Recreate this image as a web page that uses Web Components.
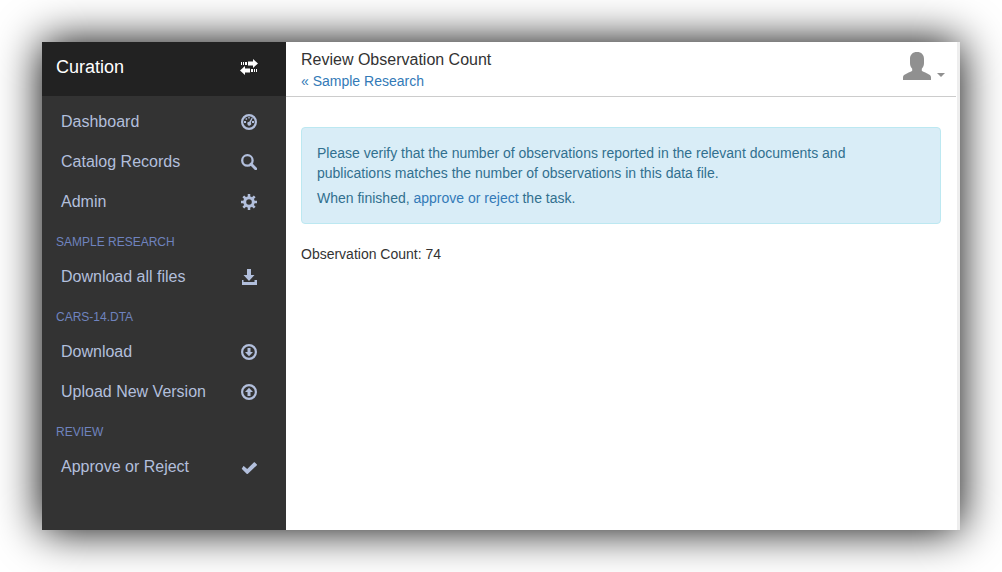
<!DOCTYPE html>
<html lang="en">
<head>
<meta charset="utf-8">
<title>Review Observation Count</title>
<style>
body{margin:0;background:#fff;font:14px/20px "Liberation Sans",Arial,sans-serif;color:#333}
</style>
</head>
<body>
<app-window>
  <side-bar slot="side" label="Curation">
    <nav-item icon="dashboard">Dashboard</nav-item>
    <nav-item icon="search">Catalog Records</nav-item>
    <nav-item icon="cog">Admin</nav-item>
    <nav-heading>SAMPLE RESEARCH</nav-heading>
    <nav-item icon="save">Download all files</nav-item>
    <nav-heading>CARS-14.DTA</nav-heading>
    <nav-item icon="download">Download</nav-item>
    <nav-item icon="upload">Upload New Version</nav-item>
    <nav-heading>REVIEW</nav-heading>
    <nav-item icon="ok">Approve or Reject</nav-item>
  </side-bar>
  <page-header label="Review Observation Count" parent="Sample Research"></page-header>
  <review-task count="74"></review-task>
</app-window>
<script>
const icons = {
  transfer: ['0 0 18 16', '<path d="M1 3h1v3H1zM3 3h1v3H3zM5 3h2v3H5zM8 2.500h5V0l5 4.500-5 4.500V6.500H8zM10 9.500v4H5V16l-5-4.500L5 7v2.500zM11 10h2v3h-2zM14 10h1v3h-1zM16 10h1v3h-1z"/>'],
  dashboard: ['0 0 16 16', '<circle cx="8" cy="8" r="6.900" fill="none" stroke="currentColor" stroke-width="2.200"/><path d="M3 7h2v2H3zM11 7h2v2h-2zM4.600 4.300h1.500v1.500H4.600zM7.300 3h1.400v1.600H7.300zM10.900 3.600l.9.5-2 4.500a1.900 1.900 0 1 1-1.500-.8z"/>'],
  search: ['0 0 16 16', '<circle cx="6.400" cy="6.400" r="5.200" fill="none" stroke="currentColor" stroke-width="2.300"/><path d="M10 10l4.700 4.700" stroke="currentColor" stroke-width="2.900" stroke-linecap="round"/>'],
  cog: ['0 0 16 16', '<circle cx="8" cy="8" r="4.300" fill="none" stroke="currentColor" stroke-width="3"/><path d="M8 0v3M8 13v3M0 8h3M13 8h3M2.300 2.300l2.200 2.200M11.500 11.500l2.200 2.200M13.700 2.300l-2.200 2.200M4.500 11.500l-2.200 2.200" stroke="currentColor" stroke-width="2.500"/>'],
  save: ['0 0 16 16', '<path d="M6 0h4v6h3.500L8 12 2.500 6H6zM1 11h1.500v2h11v-2H16v5H1z"/>'],
  download: ['0 0 16 16', '<circle cx="8" cy="8" r="6.900" fill="none" stroke="currentColor" stroke-width="2.200"/><path d="M6.500 4h3v4H12l-4 4.200L4 8h2.500z"/>'],
  upload: ['0 0 16 16', '<circle cx="8" cy="8" r="6.900" fill="none" stroke="currentColor" stroke-width="2.200"/><path d="M6.500 12h3V8H12L8 3.800 4 8h2.500z"/>'],
  ok: ['0 0 16 16', '<path d="M3 7.200l3.200 2.900 6.800-6.800a.5.500 0 0 1 .7 0l2.200 2.200a.5.500 0 0 1 0 .7l-9 8.500a1 1 0 0 1-1.300 0L.9 10.100a.5.500 0 0 1 0-.7l1.400-2.200a.5.500 0 0 1 .7 0z"/>'],
  user: ['0 0 28 28', '<path d="M14 0c4.500 0 7 2.700 7 7v4c0 2.500-.8 4.300-2.200 5.700v2.100c1.300 1.300 3 1.500 4.900 2.500C26.500 22.500 28 23.500 28 25.500V28H0v-2.500c0-2 1.500-3 4.300-4.200 1.900-1 3.600-1.200 4.900-2.500v-2.100C7.800 15.300 7 13.500 7 11V7c0-4.300 2.500-7 7-7z"/>']
};

class GlyphIcon extends HTMLElement {
  connectedCallback() {
    const [box, shapes] = icons[this.getAttribute('name')];
    this.attachShadow({mode: 'open'}).innerHTML = `<style>
      :host{display:block;flex:none;width:16px;height:16px}
      svg{display:block;width:100%;height:100%;fill:currentColor}
      </style><svg viewBox="${box}" aria-hidden="true">${shapes}</svg>`;
  }
}

class AppWindow extends HTMLElement {
  connectedCallback() {
    this.attachShadow({mode: 'open'}).innerHTML = `<style>
      :host{display:flex;margin:42px;min-height:calc(100vh - 84px);background:#fff;box-shadow:0 0 42px #000}
      aside{flex:none;width:244px;background:#333}
      main{flex:1;min-width:0;border-right:3px solid #eee}
      @media(max-width:600px){:host{flex-direction:column;margin:16px}aside{width:auto}}
      </style><aside><slot name="side"></slot></aside><main><slot></slot></main>`;
  }
}

class SideBar extends HTMLElement {
  connectedCallback() {
    this.attachShadow({mode: 'open'}).innerHTML = `<style>
      :host{display:block}
      header{display:flex;align-items:center;justify-content:space-between;box-sizing:border-box;height:54px;padding:0 28px 4px 14px;background:#222;color:#fff;font-size:18px}
      button{border:0;padding:0;background:none;color:inherit}
      glyph-icon{width:18px}
      nav{padding:6px 0 40px}
      </style><header><span>${this.getAttribute('label')}</span><button aria-label="Toggle menu"><glyph-icon name="transfer"></glyph-icon></button></header><nav><slot></slot></nav>`;
  }
}

class NavItem extends HTMLElement {
  connectedCallback() {
    this.attachShadow({mode: 'open'}).innerHTML = `<style>
      :host{display:block}
      a{display:flex;align-items:center;justify-content:space-between;padding:10px 29px 10px 19px;color:#b2bfdc;font-size:16px;line-height:20px;text-decoration:none}
      </style><a href="#"><span><slot></slot></span><glyph-icon name="${this.getAttribute('icon')}"></glyph-icon></a>`;
  }
}

class NavHeading extends HTMLElement {
  connectedCallback() {
    this.attachShadow({mode: 'open'}).innerHTML = `<style>
      :host{display:block;padding:10px 14px 5px;color:#6f83bf;font-size:12px;line-height:20px}
      </style><slot></slot>`;
  }
}

class PageHeader extends HTMLElement {
  connectedCallback() {
    this.attachShadow({mode: 'open'}).innerHTML = `<style>
      :host{display:flex;justify-content:space-between;align-items:flex-start;box-sizing:border-box;min-height:55px;margin-right:1px;padding:7px 11px 5px 15px;border-bottom:1px solid #ccc}
      h1{margin:0;font-size:16px;line-height:22px;font-weight:400}
      a{color:#337ab7;text-decoration:none}
      button{display:flex;align-items:flex-end;gap:6px;border:0;padding:3px 0 0;background:none;color:#909090}
      glyph-icon{width:28px;height:28px}
      i{width:0;border:4px solid transparent;border-top-color:currentColor;border-bottom:0;margin-bottom:3px}
      </style><div><h1>${this.getAttribute('label')}</h1><a href="#">« ${this.getAttribute('parent')}</a></div>
      <button aria-label="Account"><glyph-icon name="user"></glyph-icon><i></i></button>`;
  }
}

class ReviewTask extends HTMLElement {
  connectedCallback() {
    this.attachShadow({mode: 'open'}).innerHTML = `<style>
      :host{display:block;padding:30px 16px 30px 15px}
      section{margin-bottom:20px;padding:15px 35px 15px 15px;border:1px solid #bce8f1;border-radius:4px;background:#d9edf7;color:#31708f}
      p{margin:0}
      p+p{margin-top:5px}
      a{color:#337ab7;text-decoration:none}
      </style><section><p>Please verify that the number of observations reported in the relevant documents and publications matches the number of observations in this data file.</p>
      <p>When finished, <a href="#">approve or reject</a> the task.</p></section>
      <p>Observation Count: ${this.getAttribute('count')}</p>`;
  }
}

customElements.define('glyph-icon', GlyphIcon);
customElements.define('app-window', AppWindow);
customElements.define('side-bar', SideBar);
customElements.define('nav-item', NavItem);
customElements.define('nav-heading', NavHeading);
customElements.define('page-header', PageHeader);
customElements.define('review-task', ReviewTask);
</script>
</body>
</html>
